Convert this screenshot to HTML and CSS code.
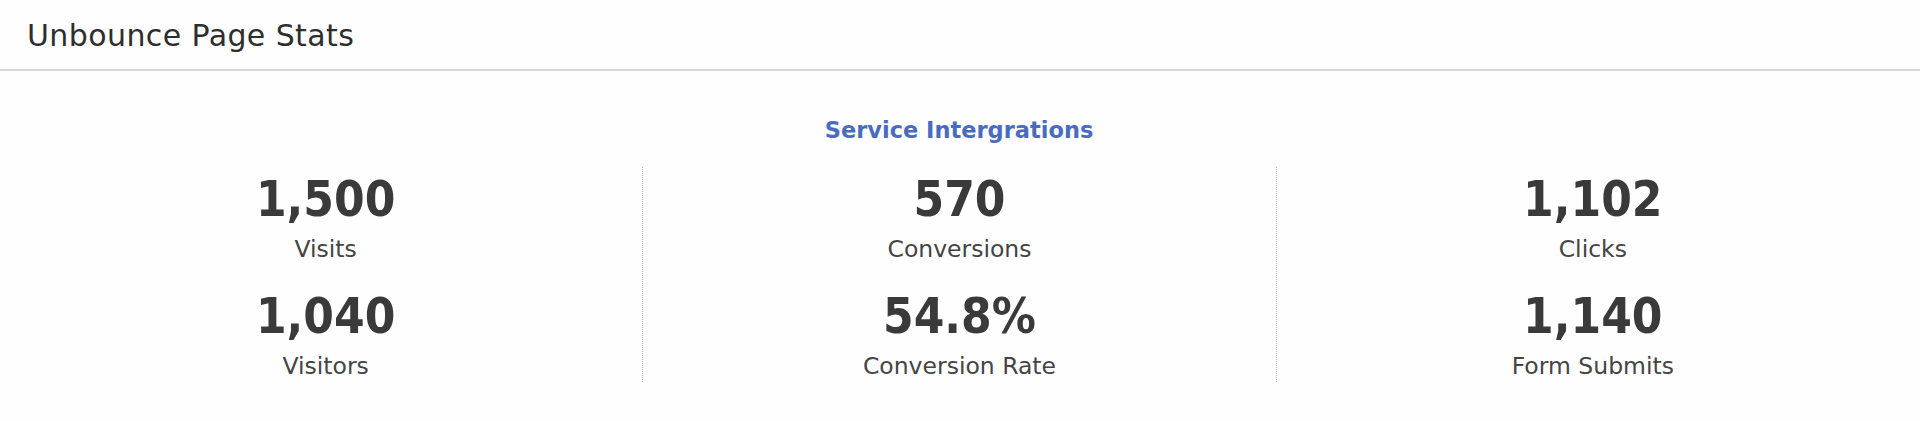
FILE: index.html
```html
<!DOCTYPE html>
<html lang="en">
<head>
<meta charset="utf-8">
<title>Unbounce Page Stats</title>
<link rel="stylesheet" href="styles.css">
</head>
<body>
<div class="widget">
  <header class="widget-header">
    <h1 class="widget-title">Unbounce Page Stats</h1>
  </header>
  <section class="widget-body">
    <h2 class="section-title">Service Intergrations</h2>
    <div class="stats-grid">
      <div class="stats-col">
        <div class="stat">
          <div class="stat-value">1,500</div>
          <div class="stat-label">Visits</div>
        </div>
        <div class="stat">
          <div class="stat-value">1,040</div>
          <div class="stat-label">Visitors</div>
        </div>
      </div>
      <div class="stats-col">
        <div class="stat">
          <div class="stat-value">570</div>
          <div class="stat-label">Conversions</div>
        </div>
        <div class="stat">
          <div class="stat-value">54.8%</div>
          <div class="stat-label">Conversion Rate</div>
        </div>
      </div>
      <div class="stats-col">
        <div class="stat">
          <div class="stat-value">1,102</div>
          <div class="stat-label">Clicks</div>
        </div>
        <div class="stat">
          <div class="stat-value">1,140</div>
          <div class="stat-label">Form Submits</div>
        </div>
      </div>
    </div>
  </section>
</div>
</body>
</html>
```

FILE: styles.css
```css
html, body {
  margin: 0;
  padding: 0;
  background: #fefefe;
}

body {
  font-family: "DejaVu Sans", "Liberation Sans", sans-serif;
  color: #3b3b3b;
}

.widget-header {
  height: 66px;
  padding: 3px 0 0 27px;
  border-bottom: 2px solid #d6d6d6;
}

.widget-title {
  margin: 0;
  font-size: 30px;
  line-height: 66px;
  font-weight: 400;
  letter-spacing: 0.4px;
  color: #2e2e2e;
}

.widget-body {
  padding: 48px 11px 0 9px;
}

.section-title {
  margin: 0;
  text-align: center;
  font-size: 22.5px;
  line-height: 23px;
  font-weight: 700;
  color: #4a6cbf;
}

.stats-grid {
  margin-top: 25px;
  display: grid;
  grid-template-columns: repeat(3, 1fr);
}

.stats-col {
  display: flex;
  flex-direction: column;
  align-items: center;
  gap: 31px;
  padding: 8px 0 4px;
}

.stats-col + .stats-col {
  border-left: 1px dotted #bdbdbd;
}

.stat {
  display: flex;
  flex-direction: column;
  align-items: center;
}

.stat-value {
  font-family: "DejaVu Sans Condensed", "DejaVu Sans", sans-serif;
  font-stretch: condensed;
  font-size: 49px;
  line-height: 50px;
  font-weight: 700;
  color: #3a3a3a;
}

.stat-label {
  margin-top: 12px;
  font-size: 23.5px;
  line-height: 24px;
  font-weight: 400;
  color: #444;
}
```
